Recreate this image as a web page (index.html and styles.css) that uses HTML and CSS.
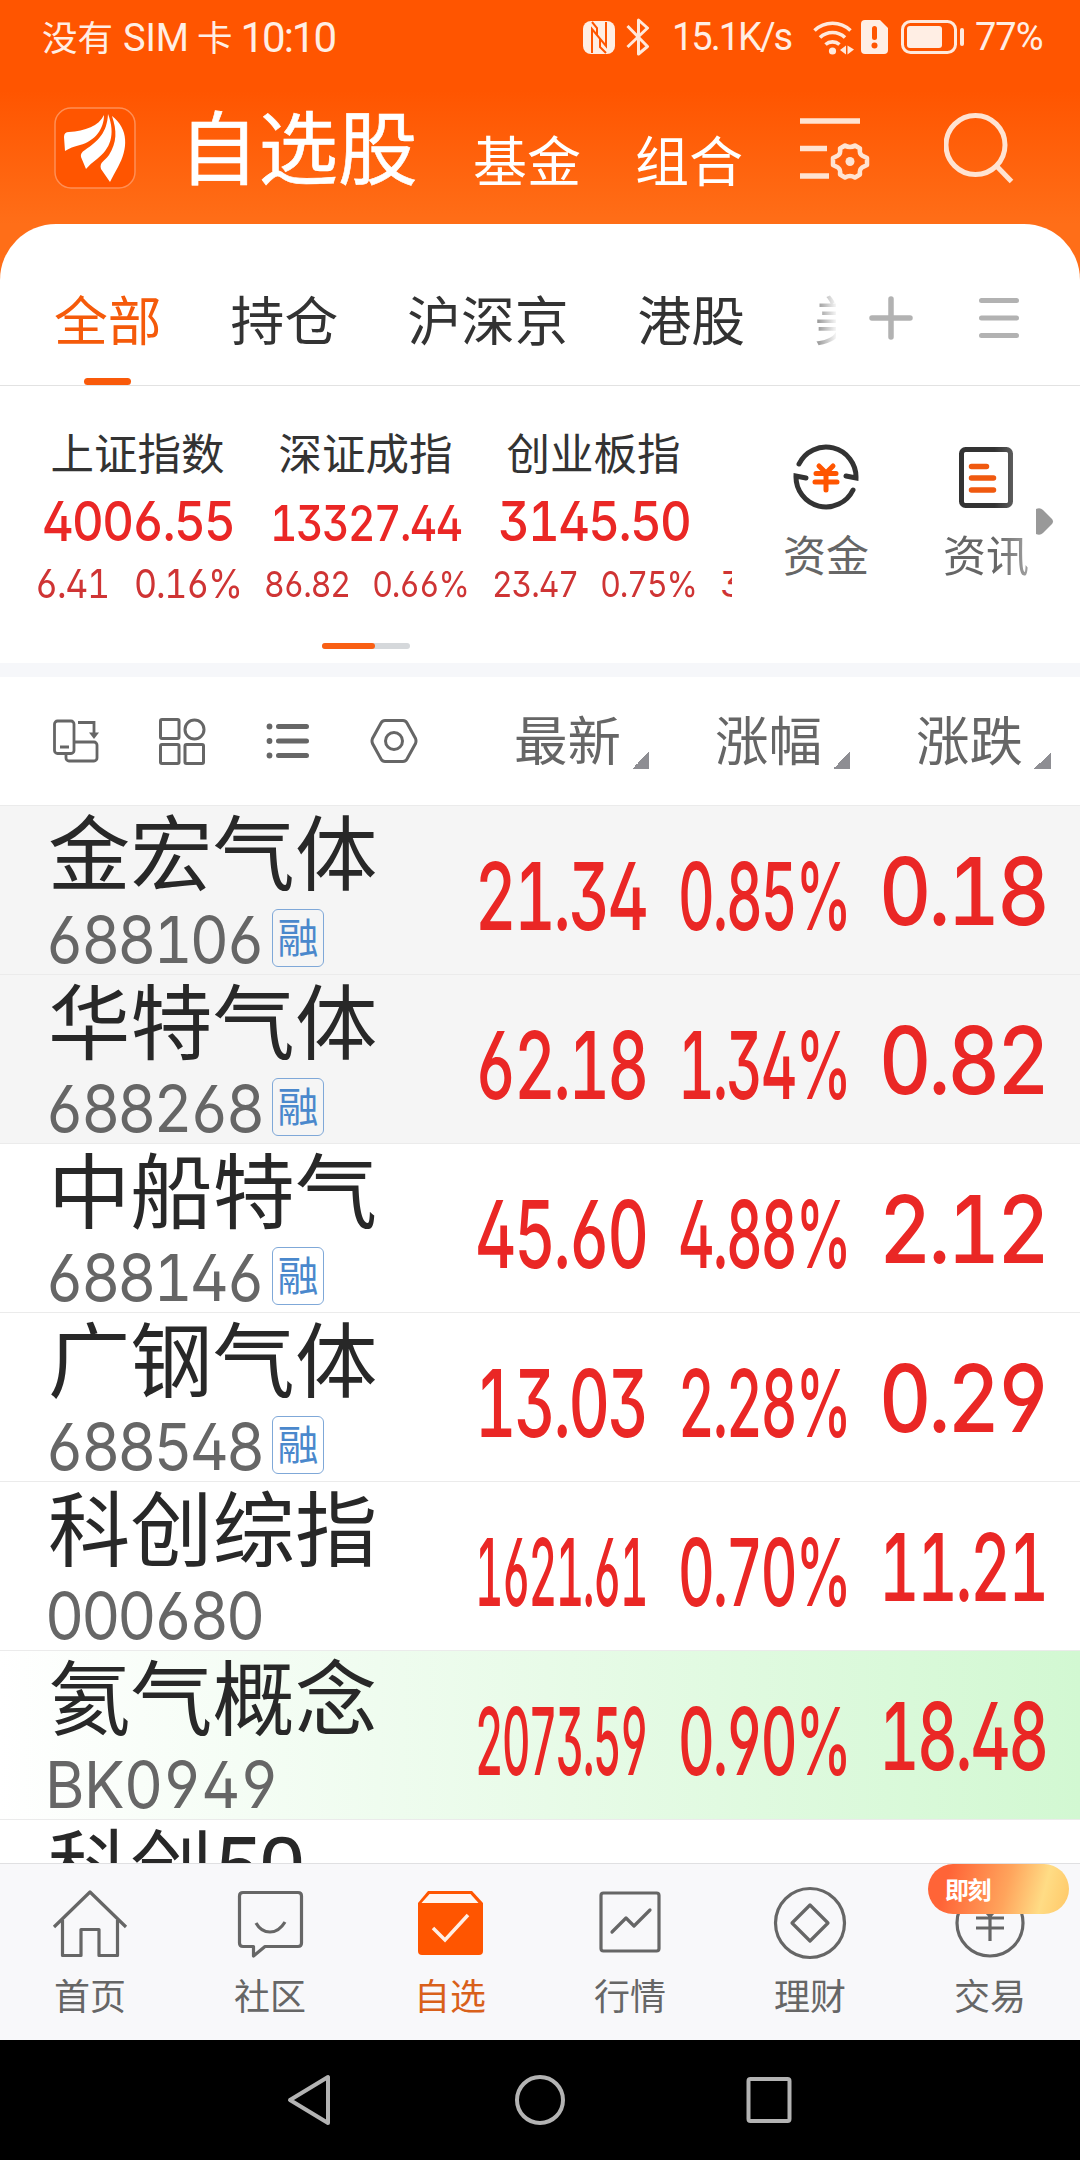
FILE: index.html
```
<!DOCTYPE html>
<html lang="zh-CN">
<head>
    <meta charset="UTF-8">
    <meta name="viewport" content="width=device-width, initial-scale=1.0">
    <title>自选股</title>
    <link rel="stylesheet" href="styles.css">
</head>
<body>

<div class="phone">

    <header class="header">
        <div class="status">
            <div class="status-left">
                <span class="carrier">没有 <b>SIM</b> 卡</span>
                <span class="clock">10:10</span>
            </div>
            <div class="status-right">
                <svg class="nfc" width="32" height="33" viewBox="0 0 32 33">
                    <rect width="32" height="33" rx="8" fill="#ffeee4"/>
                    <path d="M9 32V8l14 17V1M9 1l5 6v7M23 32l-6-6v-8" fill="none" stroke="#ff5500" stroke-width="2"/>
                </svg>
                <svg class="bt" width="24" height="38" viewBox="0 0 24 38">
                    <path d="M1.5 8l20 20.5-9 7.5V2l9 8L1.5 29" fill="none" stroke="#ffe9dc" stroke-width="3" stroke-linejoin="round"/>
                </svg>
                <span class="speed">15.1K/s</span>
                <svg class="wifi" width="42" height="35" viewBox="0 0 42 35">
                    <g fill="none" stroke="#ffe9dc" stroke-width="3.6">
                        <path d="M1.5 10.5a26 26 0 0 1 36 0"/>
                        <path d="M7 17.5a18 18 0 0 1 25 0"/>
                        <path d="M12.5 24.5a10.5 10.5 0 0 1 14 0"/>
                    </g>
                    <circle cx="19.5" cy="31" r="3.6" fill="#ffe9dc"/>
                    <path d="M33 25.5v9l-6-4.5zM34.5 25.5l6.5 4-6.5 5z" fill="#ffe9dc"/>
                </svg>
                <svg class="sim" width="27" height="34" viewBox="0 0 27 34">
                    <path d="M4 0h15l8 8v22a4 4 0 0 1-4 4H4a4 4 0 0 1-4-4V4a4 4 0 0 1 4-4z" fill="#ffeee4"/>
                    <path d="M13.5 8.5v9" stroke="#ff5500" stroke-width="5" stroke-linecap="round"/>
                    <circle cx="13.5" cy="25.5" r="3" fill="#ff5500"/>
                </svg>
                <svg class="battery" width="63" height="34" viewBox="0 0 63 34">
                    <rect x="1.5" y="1.5" width="53" height="31" rx="8" fill="none" stroke="#ffe9dc" stroke-width="3"/>
                    <rect x="6" y="6" width="35" height="22" rx="3" fill="#ffeee4"/>
                    <path d="M61 10v14" stroke="#ffe9dc" stroke-width="4" stroke-linecap="round"/>
                </svg>
                <span class="percent">77%</span>
            </div>
        </div>

        <div class="topbar">
            <svg class="logo" width="82" height="82" viewBox="0 0 82 82">
                <rect x="1" y="1" width="80" height="80" rx="16" fill="#ff5500" stroke="#ff8f55" stroke-width="1.5"/>
                <g fill="#fff">
                    <path d="M50 8C45 19 31 24 15 25q-5 0-5 5l1 14q6-4 15-6C41 34 50 22 50 8z"/>
                    <path d="M54 7C53 26 44 34 31 43q-5 3-4 7l5 12q4-5 11-10C56 42 62 28 54 7z"/>
                    <path d="M58 9c5 15 5 26-3 39-4 6-10 7-8 14l9 13q3-6 8-15C74 42 75 22 58 9z"/>
                </g>
            </svg>
            <h1>自选股</h1>
            <a class="top-link">基金</a>
            <a class="top-link">组合</a>
            <svg class="list-set" width="70" height="64" viewBox="0 0 70 64">
                <path d="M0 4h60M0 31.5h27M0 59h29" fill="none" stroke="#ffe3d2" stroke-width="5.5"/>
                <path d="M45 28.5q5 3 10 0l5 3q-1 5 2 7l5 2.5v7l-5 2.5q-3 2-2 7l-5 3q-5-3-10 0l-5-3q1-5-2-7l-5-2.5v-7l5-2.5q3-2 2-7z" fill="none" stroke="#ffe3d2" stroke-width="4.5" stroke-linejoin="round"/>
                <circle cx="50" cy="44.5" r="4.5" fill="#ffe3d2"/>
            </svg>
            <svg class="search" width="70" height="72" viewBox="0 0 70 72">
                <circle cx="31.5" cy="33" r="29.5" fill="none" stroke="#ffe3d2" stroke-width="5"/>
                <path d="M52.5 54l15 15.5" stroke="#ffe3d2" stroke-width="5"/>
            </svg>
        </div>
    </header>

    <section class="panel">
        <nav class="tabs">
            <div class="tab-list">
                <a class="tab active">全部</a>
                <a class="tab">持仓</a>
                <a class="tab">沪深京</a>
                <a class="tab">港股</a>
                <a class="tab last">美</a>
            </div>
            <svg class="plus" width="44" height="44" viewBox="0 0 44 44">
                <path d="M22 3v38M3 22h38" stroke="#b2b2b2" stroke-width="5.5" stroke-linecap="round"/>
            </svg>
            <svg class="menu" width="42" height="42" viewBox="0 0 42 42">
                <path d="M3.5 3.5h35M3.5 21h35M3.5 38.5h35" stroke="#b2b2b2" stroke-width="5" stroke-linecap="round"/>
            </svg>
        </nav>

        <div class="market">
            <div class="indices">
                <div class="index">
                    <div class="index-name">上证指数</div>
                    <div class="index-value"><span class="fit">4006.55</span></div>
                    <div class="index-change"><span class="fit">6.41 &nbsp; 0.16%</span></div>
                </div>
                <div class="index small">
                    <div class="index-name">深证成指</div>
                    <div class="index-value"><span class="fit">13327.44</span></div>
                    <div class="index-change"><span class="fit">86.82 &nbsp; 0.66%</span></div>
                </div>
                <div class="index mid">
                    <div class="index-name">创业板指</div>
                    <div class="index-value"><span class="fit">3145.50</span></div>
                    <div class="index-change"><span class="fit">23.47 &nbsp; 0.75%</span></div>
                </div>
                <div class="index small">
                    <div class="index-name"></div>
                    <div class="index-value next"><span>1</span></div>
                    <div class="index-change"><span>3</span></div>
                </div>
            </div>
            <div class="shortcuts">
                <a class="shortcut">
                    <svg width="66" height="66" viewBox="0 0 66 66">
                        <g fill="none" stroke="#333" stroke-width="5" stroke-linecap="round">
                            <path d="M6 20a30 30 0 0 1 57 14l-10-2"/>
                            <path d="M60 46A30 30 0 0 1 3 32l10 2"/>
                        </g>
                        <path d="M26 22l7 7 7-7M23 29.5h20M22 38h22M33 29v17" fill="none" stroke="#ff5500" stroke-width="5" stroke-linecap="round"/>
                    </svg>
                    资金
                </a>
                <a class="shortcut faded">
                    <svg width="66" height="66" viewBox="0 0 66 66">
                        <rect x="8.5" y="5.5" width="49" height="56" rx="4" fill="none" stroke="#333" stroke-width="5"/>
                        <path d="M18.5 22.5h15M18.5 34h22M18.5 46h22" stroke="#f0590f" stroke-width="5.5" stroke-linecap="round"/>
                    </svg>
                    资讯
                </a>
                <svg class="more" width="18" height="27" viewBox="0 0 18 27">
                    <path d="M0 1q4-2 7 1l9 9q2 2.5 0 5l-9 9q-3 3-7 1z" fill="#999"/>
                </svg>
            </div>
        </div>
        <div class="pager"><i></i></div>
    </section>

    <section class="list-head">
        <div class="tools">
            <svg width="48" height="48" viewBox="0 0 48 48">
                <g fill="none" stroke="#666" stroke-width="2.8">
                    <rect x="2.5" y="4" width="19.5" height="32.5" rx="3"/>
                    <path d="M8 30h9" stroke-width="3"/>
                    <path d="M22 25h20a3 3 0 0 1 3 3v13a3 3 0 0 1-3 3H17a3 3 0 0 1-3-3v-4"/>
                    <path d="M26 5.5h16v11"/>
                </g>
                <path d="M37 15.5h10l-5 6.5z" fill="#666"/>
            </svg>
            <svg width="48" height="48" viewBox="0 0 48 48">
                <g fill="none" stroke="#666" stroke-width="3">
                    <rect x="2.5" y="2.5" width="18.5" height="19" rx="1.5"/>
                    <rect x="2.5" y="27.5" width="18.5" height="19" rx="1.5"/>
                    <rect x="27" y="27.5" width="18.5" height="19" rx="1.5"/>
                    <circle cx="36.5" cy="12.5" r="9.5"/>
                </g>
            </svg>
            <svg width="48" height="48" viewBox="0 0 48 48">
                <path d="M14.5 9.5h28M14.5 24h28M14.5 38.5h28" stroke="#666" stroke-width="5" stroke-linecap="round"/>
                <g fill="#666"><circle cx="5.5" cy="9.5" r="2.9"/><circle cx="5.5" cy="24" r="2.9"/><circle cx="5.5" cy="38.5" r="2.9"/></g>
            </svg>
            <svg width="48" height="48" viewBox="0 0 48 48">
                <g fill="none" stroke="#666" stroke-width="3">
                    <path d="M15 3.5h18q2.5 0 4 2.5l8.5 15.5q1 2.5 0 5L37 42q-1.5 2.5-4 2.5H15q-2.5 0-4-2.5L2.5 26.5q-1-2.5 0-5L11 6q1.5-2.5 4-2.5z"/>
                    <circle cx="24" cy="24" r="8.5"/>
                </g>
            </svg>
        </div>
        <div class="sort">最新</div>
        <div class="sort">涨幅</div>
        <div class="sort">涨跌</div>
    </section>

    <main class="stocks">
        <div class="stock pinned">
            <div class="stock-info">
                <div class="stock-name">金宏气体</div>
                <div class="stock-code"><span>688106</span><em>融</em></div>
            </div>
            <div class="num"><span class="fit">21.34</span></div>
            <div class="num"><span class="fit">0.85%</span></div>
            <div class="num up"><span class="fit">0.18</span></div>
        </div>
        <div class="stock pinned">
            <div class="stock-info">
                <div class="stock-name">华特气体</div>
                <div class="stock-code"><span>688268</span><em>融</em></div>
            </div>
            <div class="num"><span class="fit">62.18</span></div>
            <div class="num"><span class="fit">1.34%</span></div>
            <div class="num up"><span class="fit">0.82</span></div>
        </div>
        <div class="stock">
            <div class="stock-info">
                <div class="stock-name">中船特气</div>
                <div class="stock-code"><span>688146</span><em>融</em></div>
            </div>
            <div class="num"><span class="fit">45.60</span></div>
            <div class="num"><span class="fit">4.88%</span></div>
            <div class="num up"><span class="fit">2.12</span></div>
        </div>
        <div class="stock">
            <div class="stock-info">
                <div class="stock-name">广钢气体</div>
                <div class="stock-code"><span>688548</span><em>融</em></div>
            </div>
            <div class="num"><span class="fit">13.03</span></div>
            <div class="num"><span class="fit">2.28%</span></div>
            <div class="num up"><span class="fit">0.29</span></div>
        </div>
        <div class="stock">
            <div class="stock-info">
                <div class="stock-name">科创综指</div>
                <div class="stock-code"><span>000680</span></div>
            </div>
            <div class="num"><span class="fit">1621.61</span></div>
            <div class="num"><span class="fit">0.70%</span></div>
            <div class="num up"><span class="fit">11.21</span></div>
        </div>
        <div class="stock flash">
            <div class="stock-info">
                <div class="stock-name">氦气概念</div>
                <div class="stock-code board"><span>BK0949</span></div>
            </div>
            <div class="num"><span class="fit">2073.59</span></div>
            <div class="num"><span class="fit">0.90%</span></div>
            <div class="num up"><span class="fit">18.48</span></div>
        </div>
        <div class="stock">
            <div class="stock-info">
                <div class="stock-name">科创<span>50</span></div>
            </div>
        </div>
    </main>

    <nav class="bottom-nav">
        <a class="nav-item">
            <svg width="76" height="76" viewBox="0 0 76 76">
                <g fill="none" stroke="#666" stroke-width="3.2" stroke-linejoin="round">
                    <path d="M2 42L38 7l36 35"/>
                    <path d="M10.5 35v35.5H29v-26h18v26h18.500V35"/>
                </g>
            </svg>
            首页
        </a>
        <a class="nav-item">
            <svg width="76" height="76" viewBox="0 0 76 76">
                <g fill="none" stroke="#666" stroke-width="3.2">
                    <path d="M11 7.5h55q3.5 0 3.5 3.5v47q0 3.5-3.5 3.5H33L21.5 71v-9.5H11q-3.5 0-3.5-3.5V11q0-3.5 3.5-3.5z" stroke-linejoin="round"/>
                    <path d="M24 38q5 9 14 9t15-10"/>
                </g>
            </svg>
            社区
        </a>
        <a class="nav-item active">
            <svg width="76" height="76" viewBox="0 0 76 76">
                <path d="M16 6h44l11 12v48q0 4-4 4H10q-4 0-4-4V18z" fill="#ff5500"/>
                <path d="M17.5 9h41l8 9h-57z" fill="#fff6f0"/>
                <path d="M21 43l12 12 23-25" fill="none" stroke="#ffeee4" stroke-width="3.5"/>
            </svg>
            自选
        </a>
        <a class="nav-item">
            <svg width="76" height="76" viewBox="0 0 76 76">
                <g fill="none" stroke="#666" stroke-width="3.2" stroke-linejoin="round">
                    <rect x="9" y="8" width="58" height="58" rx="2.5"/>
                    <path d="M20 47l14-14 8 8 16-16" stroke-linecap="round"/>
                </g>
            </svg>
            行情
        </a>
        <a class="nav-item">
            <svg width="76" height="76" viewBox="0 0 76 76">
                <g fill="none" stroke="#666" stroke-width="3.2" stroke-linejoin="round">
                    <circle cx="38" cy="38" r="34.5"/>
                    <path d="M38 20l18 18-18 18-18-18z"/>
                </g>
            </svg>
            理财
        </a>
        <a class="nav-item">
            <svg width="76" height="76" viewBox="0 0 76 76">
                <g fill="none" stroke="#666" stroke-width="3.2">
                    <circle cx="38" cy="38" r="33"/>
                    <path d="M28 20l10 11 10-11M24 33h28M24 43h28M38 31v25"/>
                </g>
            </svg>
            交易
            <span class="badge">即刻</span>
        </a>
    </nav>

    <footer class="system-nav">
        <svg width="48" height="52" viewBox="0 0 48 52"><path d="M42 3v46L4 26z" fill="none" stroke="#b3b3b3" stroke-width="4" stroke-linejoin="round"/></svg>
        <svg width="52" height="52" viewBox="0 0 52 52"><circle cx="26" cy="26" r="23" fill="none" stroke="#b3b3b3" stroke-width="4"/></svg>
        <svg width="48" height="48" viewBox="0 0 48 48"><rect x="2.5" y="3" width="41" height="42" rx="2" fill="none" stroke="#b3b3b3" stroke-width="4"/></svg>
    </footer>

</div>

<script>
    // Squeeze or stretch every number to the width of its column
    document.querySelectorAll('.fit').forEach(el => {
        const scale = el.parentElement.clientWidth / el.offsetWidth;
        el.style.transform = `scaleX(${scale})`;
    });
</script>

</body>
</html>
```
FILE: styles.css
```
* {
    box-sizing: border-box;
}

body {
    margin: 0;
    font-family: "Noto Sans CJK SC", sans-serif;
    color: #333;
    background-color: #fff;
}

svg {
    display: block;
    flex: none;
}

.phone {
    width: 1080px;
    height: 2160px;
    display: flex;
    flex-direction: column;
    overflow: hidden;
}

/* header */

.header {
    height: 284px;
    flex: none;
    background: linear-gradient(#ff5500 90px, #ff6e18 224px);
}

.status {
    height: 74px;
    padding: 0 37px 0 42px;
    display: flex;
    justify-content: space-between;
    align-items: center;
    color: #ffeee4;
}

.status-left,
.status-right {
    display: flex;
    align-items: center;
}

.carrier {
    font-size: 35.5px;
    line-height: 70px;
}

.carrier b {
    margin-left: 2px;
    font-family: Roboto, sans-serif;
    font-size: 38px;
    font-weight: 400;
}

.clock {
    margin-left: 8px;
    font-family: Roboto, sans-serif;
    font-size: 42px;
    letter-spacing: -2px;
}

.status-right {
    font-family: Roboto, sans-serif;
    font-size: 38px;
}

.bt {
    margin-left: 11px;
}

.speed {
    width: 119px;
    margin-left: 22px;
    letter-spacing: -2px;
    white-space: nowrap;
}

.wifi {
    margin-left: 22px;
}

.sim {
    margin-left: 6px;
}

.battery {
    margin-left: 13px;
}

.percent {
    width: 68px;
    margin-left: 11px;
    letter-spacing: -1px;
}

.topbar {
    height: 150px;
    padding-left: 54px;
    display: flex;
    align-items: flex-start;
    color: #fff;
}

.logo {
    margin-top: 33px;
}

h1 {
    width: 240px;
    margin: 31px 0 0 43px;
    font-size: 79.5px;
    font-weight: 400;
    line-height: 78px;
    white-space: nowrap;
    -webkit-text-stroke: 0.6px #fff;
}

.top-link {
    width: 108px;
    margin: 58px 0 0 54px;
    font-size: 54px;
    line-height: 53px;
}

.list-set {
    margin: 43px 0 0 57px;
}

.search {
    margin: 38px 0 0 74px;
}

/* white panel with tabs and indices */

.panel {
    height: 439px;
    margin-top: -60px;
    flex: none;
    background-color: #fff;
    border-radius: 56px 56px 0 0;
}

.tabs {
    height: 162px;
    padding-left: 54px;
    display: flex;
    align-items: flex-start;
    border-bottom: 1px solid #e2e2e2;
}

.tab-list {
    width: 782px;
    display: flex;
    gap: 69px;
    overflow: hidden;
}

.tab {
    height: 161px;
    display: flex;
    flex-direction: column;
    flex: none;
    justify-content: space-between;
    align-items: center;
    padding-top: 67px;
    font-size: 53.8px;
    line-height: 53px;
}

.tab.active {
    color: #f55a0a;
}

.tab.active::after {
    content: "";
    width: 47px;
    height: 7px;
    border-radius: 3.5px;
    background-color: #f95a0a;
}

.tab.last {
    width: 24px;
    align-items: flex-start;
    overflow: hidden;
    background: linear-gradient(90deg, #888, #fff);
    background-clip: text;
    color: transparent;
}

.plus {
    margin: 72px 0 0 33px;
}

.menu {
    margin: 73px 0 0 65px;
}

.market {
    height: 257px;
    padding-left: 36px;
    display: flex;
}

.indices {
    width: 696px;
    display: flex;
    gap: 23px;
    overflow: hidden;
}

.index {
    width: 205px;
    flex: none;
    padding-top: 39px;
}

.index-name {
    height: 59px;
    margin-left: -2px;
    font-size: 43.5px;
    line-height: 54px;
    text-align: center;
}

.index-value,
.index-change,
.num {
    font-family: Inter, sans-serif;
    font-feature-settings: "ss01", "tnum";
    letter-spacing: -0.035em;
    white-space: nowrap;
    color: #ea2725;
}

.fit {
    display: inline-block;
    transform-origin: 0 50%;
}

.index-value {
    width: 192px;
    height: 78px;
    margin-left: 6px;
    font-size: 55px;
    font-weight: 550;
    line-height: 74px;
}

.index-value.next {
    margin-left: 9px;
}

.index-change {
    width: 207px;
    height: 40px;
    margin-left: -1px;
    font-size: 40px;
    line-height: 43px;
    color: #cf3434;
}

.small .index-value {
    font-size: 49px;
    line-height: 79px;
}

.small .index-change,
.mid .index-change {
    width: 205px;
    margin-left: 0;
    font-size: 36px;
    line-height: 45px;
}

.shortcuts {
    position: relative;
    display: flex;
    gap: 72px;
    padding: 58px 0 0 50px;
}

.shortcut {
    width: 88px;
    display: flex;
    flex-direction: column;
    align-items: center;
    font-size: 43px;
    line-height: 58px;
    gap: 14px;
    color: #666;
}

.faded {
    mask-image: linear-gradient(90deg, #000 60%, rgba(0, 0, 0, 0.6));
}

.more {
    position: absolute;
    left: 304px;
    top: 122px;
}

.pager {
    width: 88px;
    height: 6px;
    margin: 0 0 0 322px;
    border-radius: 3px;
    background-color: #d5d8db;
}

.pager i {
    display: block;
    width: 53px;
    height: 6px;
    border-radius: 3px;
    background-color: #f95f14;
}

/* column heads */

.list-head {
    height: 142px;
    flex: none;
    display: flex;
    align-items: center;
    border-top: 14px solid #f6f7fa;
    padding-left: 52px;
}

.tools {
    width: 462px;
    display: flex;
    gap: 58px;
    flex: none;
}

.sort {
    width: 201px;
    padding: 0 30px 8px 0;
    flex: none;
    display: flex;
    justify-content: flex-end;
    align-items: flex-end;
    gap: 11px;
    font-size: 53.5px;
    line-height: 65px;
    color: #666;
}

.tools + .sort {
    width: 165px;
}

.sort::after {
    content: "";
    width: 17px;
    height: 17px;
    margin-bottom: 1px;
    background: linear-gradient(135deg, transparent 50%, #8e8e93 50%);
}

/* stock rows */

.stocks {
    height: 1058px;
    flex: none;
    overflow: hidden;
}

.stock {
    height: 169px;
    padding-left: 48px;
    display: flex;
    border-top: 1px solid #ebebeb;
}

.pinned {
    background-color: #f5f5f5;
}

.flash {
    background-image: linear-gradient(90deg, #fff, #effcef 35%, #d2f8d2);
}

.stock-info {
    width: 427px;
}

.stock-name {
    height: 96px;
    font-size: 82.3px;
    line-height: 85px;
    color: #282828;
}

.stock-name span {
    font-family: Roboto, sans-serif;
    font-size: 85px;
    letter-spacing: -2px;
}

.stock-code {
    height: 72px;
    display: flex;
    align-items: center;
    font-family: Inter, sans-serif;
    font-feature-settings: "ss01", "tnum";
    font-size: 65px;
    letter-spacing: -0.05em;
    color: #666;
}

.stock-code span {
    width: 227px;
    margin-left: -3px;
    padding-top: 4px;
    line-height: 72px;
    transform: scaleX(0.93);
    transform-origin: 0 50%;
}

.stock-code.board span {
    letter-spacing: -0.01em;
}

.stock-code em {
    width: 52px;
    height: 58px;
    border: 1.5px solid #7fa8d8;
    border-radius: 6px;
    font-family: "Noto Sans CJK SC", sans-serif;
    font-size: 41px;
    font-style: normal;
    line-height: 51px;
    letter-spacing: 0;
    text-align: center;
    color: #4a88cc;
}

.num {
    width: 172px;
    margin-right: 31px;
    padding-top: 45px;
    font-size: 93px;
    font-weight: 450;
    line-height: 90px;
}

.num.up {
    width: 168px;
    padding-top: 40px;
    margin-left: -2px;
    margin-right: 0;
}

/* bottom navigation */

.bottom-nav {
    height: 177px;
    flex: none;
    display: flex;
    border-top: 1px solid #e0e0e2;
    background-color: #f8f8fa;
}

.nav-item {
    position: relative;
    width: 180px;
    padding-top: 21px;
    display: flex;
    flex-direction: column;
    align-items: center;
    font-size: 36px;
    line-height: 66px;
    color: #666;
}

.nav-item.active {
    color: #d9601a;
}

.badge {
    position: absolute;
    left: 28px;
    top: 0;
    width: 141px;
    height: 50px;
    padding-left: 17px;
    border-radius: 25px;
    background: linear-gradient(105deg, #ff6437 15%, #ffa45c 55%, #ffdc85 80%, #ffc766);
    font-size: 24px;
    font-weight: 700;
    line-height: 50px;
    letter-spacing: -1.5px;
    color: #fff;
}

.system-nav {
    height: 120px;
    flex: none;
    display: flex;
    justify-content: center;
    align-items: center;
    gap: 180px;
    background-color: #000;
}
```
